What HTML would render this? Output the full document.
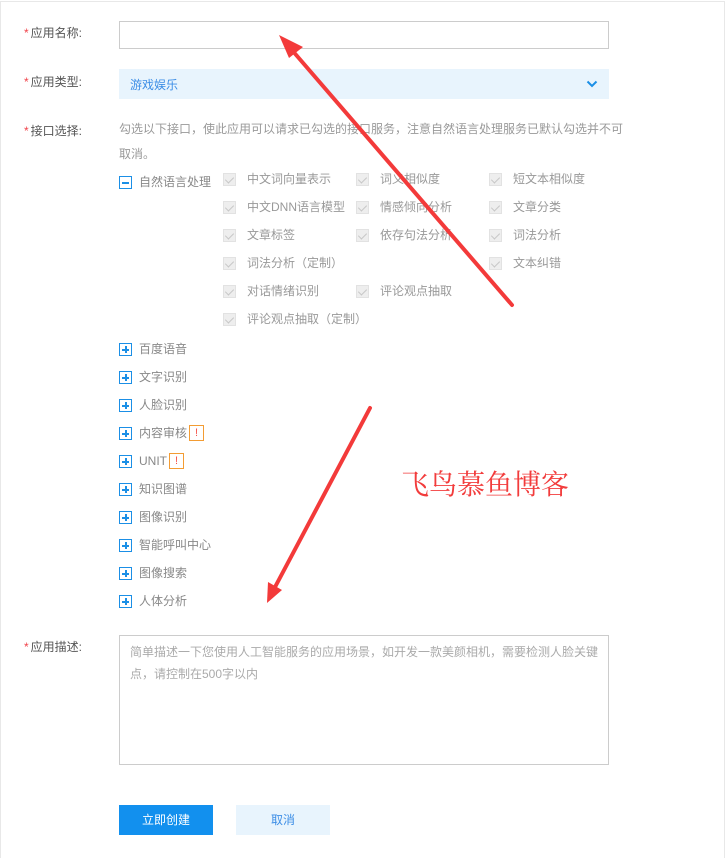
<!DOCTYPE html>
<html><head><meta charset="utf-8"><style>
*{margin:0;padding:0;box-sizing:border-box}
body{width:727px;height:858px;background:#fff;position:relative;overflow:hidden;font-family:"Liberation Sans","Noto Sans CJK SC",sans-serif;font-size:12px;color:#666}
.frame{position:absolute;left:0;top:1px;width:725px;height:857px;border:1px solid #e8e8e8;border-bottom:none}
.a{position:absolute;white-space:nowrap}
.lbl{color:#555;font-size:12px;line-height:16px}
.lbl b{color:#f0434b;font-weight:normal;margin-right:2px}
.cb{position:absolute;width:13px;height:13px;background:#eee;border:1px solid #e2e2e2}
.cb:after{content:"";position:absolute;left:3px;top:1px;width:4px;height:7px;border:solid #c8c8c8;border-width:0 1.5px 1.5px 0;transform:rotate(45deg)}
.ct{position:absolute;color:#999;font-size:12px;line-height:16px;white-space:nowrap}
.pl{position:absolute;left:119px;width:13px;height:13px;border:1px solid #1b8fe6}
.pl:before{content:"";position:absolute;left:2px;top:5px;width:7px;height:1.5px;background:#1b8fe6}
.pl.p:after{content:"";position:absolute;left:5px;top:2px;width:1.5px;height:7px;background:#1b8fe6}
.pt{position:absolute;left:139px;color:#888;font-size:12px;line-height:16px;white-space:nowrap}
.warn{display:inline-block;width:15px;height:16px;border:1px solid #f39c33;color:#f5554c;text-align:center;line-height:14px;font-size:11px;vertical-align:top;margin-left:2px}
</style></head><body>
<div class="frame"></div>

<div class="a lbl" style="left:24px;top:25px"><b>*</b>应用名称:</div>
<div class="a" style="left:119px;top:21px;width:490px;height:28px;border:1px solid #ccc"></div>

<div class="a lbl" style="left:24px;top:74px"><b>*</b>应用类型:</div>
<div class="a" style="left:119px;top:69px;width:490px;height:30px;background:#e8f4fd"></div>
<div class="a" style="left:130px;top:77px;color:#3d8ee6;font-size:12px;line-height:16px">游戏娱乐</div>
<svg class="a" style="left:586px;top:79px" width="12" height="10" viewBox="0 0 12 10"><path d="M1.5 2.5 L6 7 L10.5 2.5" fill="none" stroke="#1b8fe6" stroke-width="2"/></svg>

<div class="a lbl" style="left:24px;top:123px"><b>*</b>接口选择:</div>
<div class="a" style="left:119px;top:117px;width:510px;white-space:normal;color:#999;font-size:12px;line-height:25px">勾选以下接口，使此应用可以请求已勾选的接口服务，注意自然语言处理服务已默认勾选并不可取消。</div>

<div class="pl" style="top:176px"></div>
<div class="pt" style="top:174px">自然语言处理</div>

<div class="cb" style="left:223px;top:173px"></div><div class="ct" style="left:247px;top:171px">中文词向量表示</div>
<div class="cb" style="left:356px;top:173px"></div><div class="ct" style="left:380px;top:171px">词义相似度</div>
<div class="cb" style="left:489px;top:173px"></div><div class="ct" style="left:513px;top:171px">短文本相似度</div>

<div class="cb" style="left:223px;top:201px"></div><div class="ct" style="left:247px;top:199px">中文DNN语言模型</div>
<div class="cb" style="left:356px;top:201px"></div><div class="ct" style="left:380px;top:199px">情感倾向分析</div>
<div class="cb" style="left:489px;top:201px"></div><div class="ct" style="left:513px;top:199px">文章分类</div>

<div class="cb" style="left:223px;top:229px"></div><div class="ct" style="left:247px;top:227px">文章标签</div>
<div class="cb" style="left:356px;top:229px"></div><div class="ct" style="left:380px;top:227px">依存句法分析</div>
<div class="cb" style="left:489px;top:229px"></div><div class="ct" style="left:513px;top:227px">词法分析</div>

<div class="cb" style="left:223px;top:257px"></div><div class="ct" style="left:247px;top:255px">词法分析（定制）</div>
<div class="cb" style="left:489px;top:257px"></div><div class="ct" style="left:513px;top:255px">文本纠错</div>

<div class="cb" style="left:223px;top:285px"></div><div class="ct" style="left:247px;top:283px">对话情绪识别</div>
<div class="cb" style="left:356px;top:285px"></div><div class="ct" style="left:380px;top:283px">评论观点抽取</div>

<div class="cb" style="left:223px;top:313px"></div><div class="ct" style="left:247px;top:311px">评论观点抽取（定制）</div>

<div class="pl p" style="top:343px"></div><div class="pt" style="top:341px">百度语音</div>
<div class="pl p" style="top:371px"></div><div class="pt" style="top:369px">文字识别</div>
<div class="pl p" style="top:399px"></div><div class="pt" style="top:397px">人脸识别</div>
<div class="pl p" style="top:427px"></div><div class="pt" style="top:425px">内容审核<span class="warn">!</span></div>
<div class="pl p" style="top:455px"></div><div class="pt" style="top:453px">UNIT<span class="warn">!</span></div>
<div class="pl p" style="top:483px"></div><div class="pt" style="top:481px">知识图谱</div>
<div class="pl p" style="top:511px"></div><div class="pt" style="top:509px">图像识别</div>
<div class="pl p" style="top:539px"></div><div class="pt" style="top:537px">智能呼叫中心</div>
<div class="pl p" style="top:567px"></div><div class="pt" style="top:565px">图像搜索</div>
<div class="pl p" style="top:595px"></div><div class="pt" style="top:593px">人体分析</div>

<div class="a" style="left:401px;top:466px;color:#f23c3c;font-size:28px;line-height:34px;font-family:'Noto Serif CJK SC',serif">飞鸟慕鱼博客</div>

<div class="a lbl" style="left:24px;top:639px"><b>*</b>应用描述:</div>
<div class="a" style="left:119px;top:635px;width:490px;height:130px;border:1px solid #ccc"></div>
<div class="a" style="left:130px;top:641px;width:470px;white-space:normal;color:#aaa;font-size:12px;line-height:22px">简单描述一下您使用人工智能服务的应用场景，如开发一款美颜相机，需要检测人脸关键点，请控制在500字以内</div>

<div class="a" style="left:119px;top:805px;width:94px;height:30px;background:#1290ee;color:#fff;text-align:center;line-height:30px;font-size:12px">立即创建</div>
<div class="a" style="left:236px;top:805px;width:94px;height:30px;background:#e8f4fd;color:#3d8ee6;text-align:center;line-height:30px;font-size:12px">取消</div>

<svg class="a" style="left:0;top:0" width="727" height="858">
<path d="M512 305 L291 49" stroke="#f33a3a" stroke-width="4" stroke-linecap="round"/>
<path d="M279 35 L303 47 L289 58 Z" fill="#f33a3a"/>
<path d="M370 408 L274 589" stroke="#f33a3a" stroke-width="4" stroke-linecap="round"/>
<path d="M267 603 L268 582 L282 590 Z" fill="#f33a3a"/>
</svg>
</body></html>
